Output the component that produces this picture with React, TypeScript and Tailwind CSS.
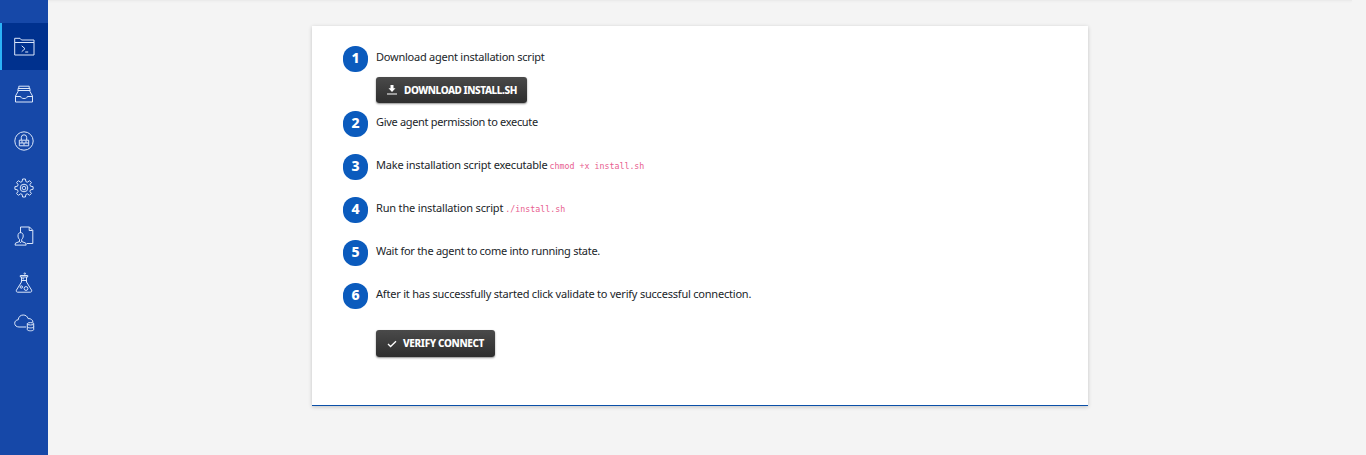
import type { ReactNode } from 'react';

const icons = {
  folder: (
    <>
      <path d="M.7 18V1.300h5.300L7.500 3H20v15H.7ZM1 5.500h19" />
      <path d="m7.700 8.800 3.300 2.900-3.300 3M11.200 15h3" />
    </>
  ),
  tray: (
    <>
      <path d="M4 7.500V4.500h12v3M4.800 4.500V2.200h10.400v2.300M4 6.500h12" />
      <path d="M4 7.500 1.500 12v6h17v-6L16 7.500M1.500 12.500h5.200c.2 1.400 1.200 2 3.300 2s3.100-.6 3.300-2h5.200" />
    </>
  ),
  lock: (
    <>
      <circle cx="10" cy="10" r="9.200" />
      <path d="M5.300 9.200h9.400v5.600H5.300ZM7.300 9V6.500a2.700 2.700 0 0 1 5.400 0V9M5.500 12h9M8 9.500V12m4-2.500V12m-2 0v2.500" />
    </>
  ),
  gear: (
    <>
      <path d="m8.600 1-.5 2.600-1.500.6-2.200-1.500-1.800 1.800 1.500 2.200-.6 1.500L.9 8.700v2.600l2.600.5.6 1.500-1.500 2.200 1.800 1.800 2.200-1.500 1.500.6.5 2.600h2.800l.5-2.600 1.500-.6 2.200 1.500 1.800-1.800-1.500-2.200.6-1.500 2.600-.5V8.700l-2.600-.5-.6-1.500 1.500-2.200-1.800-1.800-2.200 1.500-1.500-.6-.5-2.600Z" />
      <circle cx="10" cy="10" r="3.800" />
      <path d="m10 8.100 1.700 1v2L10 12l-1.700-1v-2Z" />
    </>
  ),
  user: (
    <>
      <path d="M6.500 7V1h9l3.300 3.300v13.200h-6M15.200 1v3.500h3.500" />
      <path d="M4 10c0-2.500.8-3.300 2.500-3.300S9.200 7.500 9.200 10c0 1.500-.7 2.700-1.500 3.500v2l4 1.600.5 2H1l.5-2 4-1.600v-2C4.700 12.700 4 11.500 4 10Zm1.500 5.500 1 1.200 1-1.200" />
    </>
  ),
  flask: (
    <>
      <path d="M7.500 4v5l-5 8c-.7 1.200 0 2.200 1.200 2.200h12.600c1.200 0 1.900-1 1.200-2.200l-5-8V4M6.300 2.500h7.400V4H6.300ZM7.500 7.500h5" />
      <circle cx="12" cy="15.500" r="1.900" />
      <circle cx="7.300" cy="14" r="1.200" />
      <circle cx="10.800" cy=".6" r=".7" />
      <circle cx="9.200" cy="5.700" r=".5" />
    </>
  ),
  cloud: (
    <>
      <path d="M12 15H5C2.500 15 .7 13.500.7 11.300c0-2 1.500-3.500 3.500-3.500C4.500 4.800 6.500 3 9.200 3c2.500 0 4.200 1.300 4.900 3.600 2.800-.3 4.900 1.500 4.900 4" />
      <ellipse cx="16.500" cy="11.800" rx="3.200" ry="1.200" />
      <path d="M13.300 11.800v5.800c0 1.600 6.400 1.600 6.400 0v-5.800M13.300 14.700c0 1.600 6.400 1.600 6.400 0" />
    </>
  ),
};

function NavItem({ icon, className = '' }: { icon: keyof typeof icons; className?: string }) {
  return (
    <a className={`flex w-12 shrink-0 items-center justify-center ${className}`}>
      <svg
        viewBox="0 0 20 20"
        className="size-5 overflow-visible"
        fill="none"
        stroke="#dce7fa"
        strokeWidth="1"
        strokeLinejoin="round"
      >
        {icons[icon]}
      </svg>
    </a>
  );
}

function Step({ n, className = 'h-[43px]', children }: { n: number; className?: string; children: ReactNode }) {
  return (
    <li className={`flex items-start gap-2 ${className}`}>
      <span className="flex h-[26px] w-[25px] shrink-0 items-center justify-center rounded-[12px] bg-[#0b5bbd] pb-0.5 font-['Noto_Sans',sans-serif] text-sm font-extrabold text-white">
        {n}
      </span>
      <div className="whitespace-nowrap pt-[3px] leading-4">{children}</div>
    </li>
  );
}

function Code({ children }: { children: ReactNode }) {
  return (
    <code className="ml-0.5 font-['DejaVu_Sans_Mono',monospace] text-[8.300px] leading-none tracking-normal text-[#e8608f]">
      {children}
    </code>
  );
}

const button =
  "flex items-center rounded-[3px] bg-linear-to-b from-[#4a4a4a] to-[#2e2e2e] pl-[11px] font-['Noto_Sans',sans-serif] text-[10px] font-extrabold whitespace-nowrap text-white shadow-[0_1px_2px_rgba(0,0,0,0.45)]";

export default function App() {
  return (
    <div className="flex h-[455px] w-full overflow-hidden bg-[#f4f4f4] font-['Noto_Sans',sans-serif] text-[11px] text-[#212529]">
      <nav className="flex w-12 shrink-0 flex-col bg-[#1648a8] pt-[23px]">
        <NavItem icon="folder" className="h-[47px] border-l-2 border-[#2bb3f7] bg-[#00318e] pr-0.5" />
        <NavItem icon="tray" className="h-[48px]" />
        <NavItem icon="lock" className="h-[46px]" />
        <NavItem icon="gear" className="h-[48px]" />
        <NavItem icon="user" className="h-[47px]" />
        <NavItem icon="flask" className="h-[48px]" />
        <NavItem icon="cloud" className="h-[30px]" />
      </nav>
      <main className="flex flex-1 flex-col">
        <div className="mr-[14px] h-px shrink-0 bg-[#ebebeb] shadow-[0_1px_2px_rgba(0,0,0,0.04)]" />
        <section className="ml-[264px] mt-[25px] h-[380px] w-[776px] border-b border-[#0b50a8] bg-white pl-[31px] pt-5 shadow-[0_1px_4px_rgba(0,0,0,0.2)]">
          <ol>
            <Step n={1} className="h-[65px]">
              <span className="tracking-[-0.240px]">Download agent installation script</span>
              <button className={`mt-3 h-[26px] w-[151px] ${button}`}>
                <svg viewBox="0 0 10 10" className="mr-[7px] size-[10px]" fill="white">
                  <path d="M3.500 0h3v3.300h2L5 6.900 1.500 3.300h2ZM0 8.500h10v1H0Z" />
                </svg>
                <span className="pb-px tracking-[-0.450px]">DOWNLOAD INSTALL.SH</span>
              </button>
            </Step>
            <Step n={2}>
              <span className="tracking-[-0.320px]">Give agent permission to execute</span>
            </Step>
            <Step n={3}>
              <span className="tracking-[-0.200px]">Make installation script executable</span>
              <Code>chmod +x install.sh</Code>
            </Step>
            <Step n={4}>
              <span className="tracking-[-0.170px]">Run the installation script</span>
              <Code>./install.sh</Code>
            </Step>
            <Step n={5}>
              <span className="tracking-[-0.280px]">Wait for the agent to come into running state.</span>
            </Step>
            <Step n={6} className="h-[47px]">
              <span className="tracking-[-0.210px]">
                After it has successfully started click validate to verify successful connection.
              </span>
            </Step>
          </ol>
          <button className={`ml-[33px] h-[27px] w-[119px] ${button}`}>
            <svg viewBox="0 0 10 10" className="mr-[6px] size-[10px]" fill="none" stroke="white" strokeWidth="1.300">
              <path d="m1 5 2.600 2.500L9 2.200" />
            </svg>
            <span className="tracking-[-0.350px]">VERIFY CONNECT</span>
          </button>
        </section>
      </main>
    </div>
  );
}
